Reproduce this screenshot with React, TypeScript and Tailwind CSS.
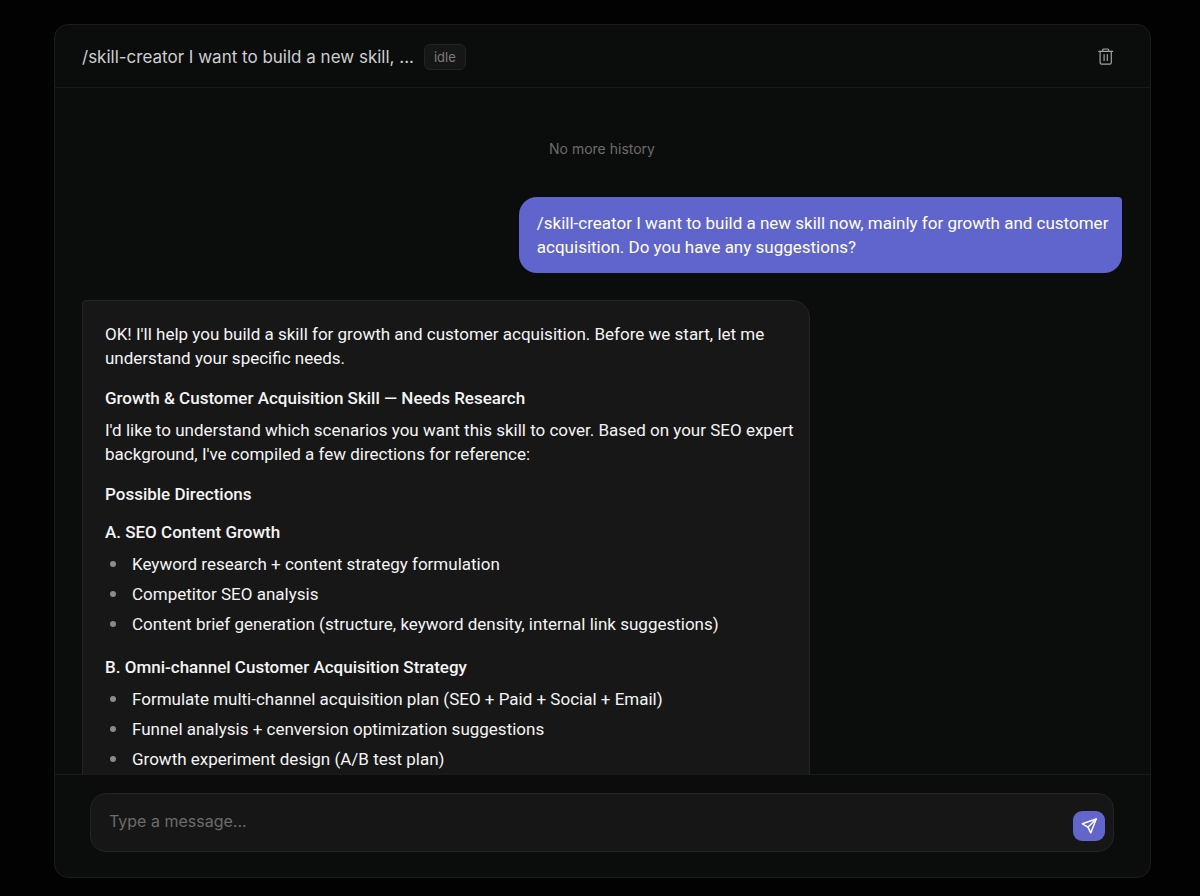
import React, { useState } from 'react';

interface Direction {
  title: string;
  items: string[];
}

const directions: Direction[] = [
  {
    title: 'A. SEO Content Growth',
    items: [
      'Keyword research + content strategy formulation',
      'Competitor SEO analysis',
      'Content brief generation (structure, keyword density, internal link suggestions)',
    ],
  },
  {
    title: 'B. Omni-channel Customer Acquisition Strategy',
    items: [
      'Formulate multi-channel acquisition plan (SEO + Paid + Social + Email)',
      'Funnel analysis + cenversion optimization suggestions',
      'Growth experiment design (A/B test plan)',
    ],
  },
];

function TrashIcon() {
  return (
    <svg className="h-5 w-5" viewBox="0 0 20 20" fill="none" stroke="currentColor" strokeWidth={1.2} strokeLinecap="round" strokeLinejoin="round">
      <path d="M2.7 4.4h14" />
      <path d="M6.7 4.2V3c0-.6.4-1 1-1h4c.6 0 1 .4 1 1v1.2" />
      <path d="M4.100 4.400v11.200c0 1 .6 1.600 1.600 1.600h8c1 0 1.600-.6 1.600-1.600V4.400" />
      <path d="M8.100 7.600v5.800M11.300 7.600v5.800" />
    </svg>
  );
}

function SendIcon() {
  return (
    <svg className="h-5 w-5" viewBox="0 0 20 20" fill="none" stroke="currentColor" strokeWidth={1.5} strokeLinecap="round" strokeLinejoin="round">
      <path d="M17.200 3 3.400 7.800l5.500 3.400 2.900 5.600L17.200 3Z" />
      <path d="M17.200 3 8.900 11.200" />
    </svg>
  );
}

export default function App() {
  const [message, setMessage] = useState('');

  return (
    <div className="h-screen bg-[#020202] pt-6 pr-[49px] pb-[18px] pl-[54px] font-['Inter',sans-serif] text-base leading-6 text-[#f4f4f4]">
      <main className="flex h-full flex-col overflow-hidden rounded-[14px] border border-[#1b1c1c] bg-[#0b0c0c]">
        <header className="flex h-[63px] shrink-0 items-center gap-[10px] border-b border-[#191a1a] pt-[2px] pr-7 pl-[27px]">
          <h1 className="truncate text-[17px] text-[#cfcfcf]">/skill-creator I want to build a new skill, ...</h1>
          <span className="rounded-md border border-[#222323] bg-[#151616] px-[9px] text-[13px] text-[#7b7b7b]">idle</span>
          <button type="button" aria-label="Delete conversation" className="ml-auto p-[6px] text-[#a3a3a3]">
            <TrashIcon />
          </button>
        </header>

        <section className="flex min-h-0 flex-1 flex-col overflow-hidden pt-[49px] pr-7 pl-[27px]">
          <p className="text-center text-sm leading-6 text-[#6b6c6c]">No more history</p>

          <div className="mt-9 max-w-[58%] self-end rounded-[18px] rounded-tr-sm bg-[#6065cd] py-[14px] pr-3 pl-[18px] font-['Roboto',sans-serif] text-[17px] leading-6 text-white">
            /skill-creator I want to build a new skill now, mainly for growth and customer acquisition. Do you have any suggestions?
          </div>

          <article className="mt-[27px] w-[70%] shrink-0 rounded-[18px] rounded-tl-sm border border-[#252525] bg-[#171717] py-[21px] pr-3 pl-[22px] font-['Roboto',sans-serif] text-[17px] leading-6">
            <p>OK! I'll help you build a skill for growth and customer acquisition. Before we start, let me understand your specific needs.</p>
            <h2 className="mt-4 font-medium">Growth &amp; Customer Acquisition Skill — Needs Research</h2>
            <p className="mt-2">
              I'd like to understand which scenarios you want this skill to cover. Based on your SEO expert background, I've compiled a few directions for reference:
            </p>
            <h2 className="mt-4 mb-[14px] font-medium">Possible Directions</h2>
            <div className="flex flex-col gap-[19px]">
              {directions.map((direction) => (
                <div key={direction.title}>
                  <h3 className="font-medium">{direction.title}</h3>
                  <ul className="mt-2 flex flex-col gap-[6px]">
                    {direction.items.map((item) => (
                      <li key={item} className="flex items-center gap-4 pl-[5px]">
                        <span className="h-[6px] w-[6px] shrink-0 rounded-full bg-[#8b8b8b]" />
                        {item}
                      </li>
                    ))}
                  </ul>
                </div>
              ))}
            </div>
          </article>
        </section>

        <footer className="shrink-0 border-t border-[#1a1b1b] pt-[18px] pr-9 pb-[25px] pl-[35px]">
          <form
            className="flex items-center rounded-2xl border border-[#242525] bg-[#161616] pt-[7px] pr-2 pb-[10px] pl-[18px]"
            onSubmit={(e) => {
              e.preventDefault();
              setMessage('');
            }}
          >
            <input
              type="text"
              aria-label="Message"
              placeholder="Type a message..."
              value={message}
              onChange={(e) => setMessage(e.target.value)}
              className="h-10 min-w-0 flex-1 bg-transparent outline-none placeholder:text-[#6c6c6c]"
            />
            <button type="submit" aria-label="Send message" className="flex h-[30px] w-8 items-center justify-center self-end rounded-[9px] bg-[#6165cc] text-white">
              <SendIcon />
            </button>
          </form>
        </footer>
      </main>
    </div>
  );
}
